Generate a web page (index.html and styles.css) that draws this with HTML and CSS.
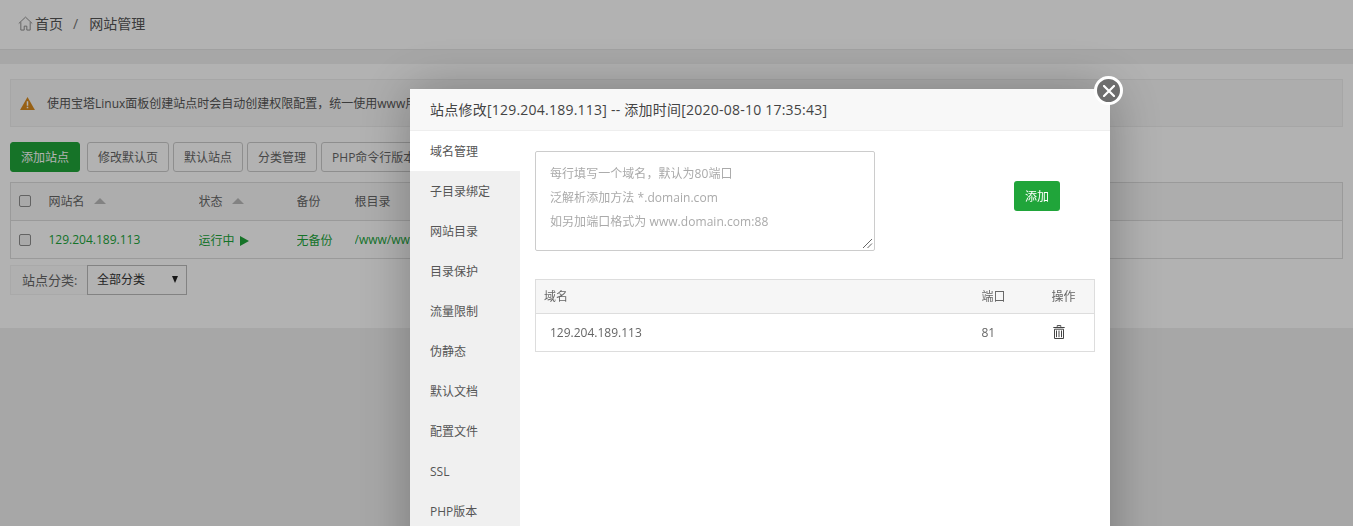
FILE: index.html
```html
<!DOCTYPE html>
<html lang="zh">
<head>
<meta charset="utf-8">
<title>网站管理</title>
<link rel="stylesheet" href="styles.css">
</head>
<body>
<div class="page">
  <header class="crumbs">
    <svg class="home" viewBox="0 0 16 16" width="15" height="15"><path d="M.8 8 8 1.200 15.200 8M3 6.600V15h3.600v-4.200h2.800V15H13V6.600" fill="none" stroke="#8a8a8a" stroke-width="1"/></svg>
    <span class="crumb">首页</span><span class="sep">/</span><span class="crumb">网站管理</span>
  </header>
  <main class="panel">
    <div class="alert">
      <svg class="warn" viewBox="0 0 16 14" width="15" height="13"><path d="M8 0 16 14H0Z" fill="#d98a1e"/><path d="M7.200 4.500h1.600v5H7.200zM7.200 10.600h1.600v1.600H7.200z" fill="#fff"/></svg>
      <span>使用宝塔Linux面板创建站点时会自动创建权限配置，统一使用www用户</span>
    </div>
    <div class="toolbar">
      <button class="btn primary">添加站点</button>
      <button class="btn">修改默认页</button>
      <button class="btn">默认站点</button>
      <button class="btn">分类管理</button>
      <button class="btn">PHP命令行版本</button>
    </div>
    <table class="sites">
      <thead>
        <tr>
          <th class="c-check"><span class="check"></span></th>
          <th class="c-name">网站名<span class="sort"></span></th>
          <th class="c-status">状态<span class="sort"></span></th>
          <th class="c-backup">备份</th>
          <th>根目录</th>
        </tr>
      </thead>
      <tbody>
        <tr>
          <td class="c-check"><span class="check"></span></td>
          <td class="green">129.204.189.113</td>
          <td class="green">运行中 <span class="play"></span></td>
          <td class="green">无备份</td>
          <td class="green">/www/www</td>
        </tr>
      </tbody>
    </table>
    <div class="filter">
      <span class="filter-label">站点分类:</span>
      <div class="select"><span>全部分类</span><span class="caret"></span></div>
    </div>
  </main>
</div>

<div class="shade">
  <section class="modal">
    <button class="close" aria-label="关闭">
      <svg viewBox="0 0 12 12" width="12" height="12"><path d="M1 1 11 11M11 1 1 11" stroke="#fff" stroke-width="2.200" stroke-linecap="round"/></svg>
    </button>
    <h2 class="modal-title">站点修改[129.204.189.113] -- 添加时间[2020-08-10 17:35:43]</h2>
    <div class="modal-body">
      <nav class="tabs">
        <a class="tab active">域名管理</a>
        <a class="tab">子目录绑定</a>
        <a class="tab">网站目录</a>
        <a class="tab">目录保护</a>
        <a class="tab">流量限制</a>
        <a class="tab">伪静态</a>
        <a class="tab">默认文档</a>
        <a class="tab">配置文件</a>
        <a class="tab">SSL</a>
        <a class="tab">PHP版本</a>
      </nav>
      <div class="content">
        <div class="add-row">
          <div class="textarea">
            <p>每行填写一个域名，默认为80端口</p>
            <p>泛解析添加方法 *.domain.com</p>
            <p>如另加端口格式为 www.domain.com:88</p>
            <svg class="grip" viewBox="0 0 11 11" width="11" height="11"><path d="M1 10 10 1M5.500 10 10 5.500" stroke="#666" stroke-width="1" fill="none"/></svg>
          </div>
          <button class="add">添加</button>
        </div>
        <table class="domains">
          <thead>
            <tr><th class="d-name">域名</th><th class="d-port">端口</th><th class="d-op">操作</th></tr>
          </thead>
          <tbody>
            <tr>
              <td class="d-host">129.204.189.113</td>
              <td class="d-port">81</td>
              <td class="d-op">
                <svg class="trash" viewBox="0 0 12 14" width="12" height="14"><path d="M4.200 1.800V.6h3.600v1.200M.3 2.500h11.400M1.500 4.200h9v9.300h-9z" fill="none" stroke="#444" stroke-width="1"/><path d="M3.500 5.500v6.700M6 5.500v6.700M8.500 5.500v6.700" stroke="#444" stroke-width="1"/></svg>
              </td>
            </tr>
          </tbody>
        </table>
      </div>
    </div>
  </section>
</div>
</body>
</html>
```
FILE: styles.css
```css
* { box-sizing: border-box; }
html, body { height: 100%; margin: 0; overflow: hidden; }
body {
  background: #f0f0f0;
  color: #666;
  font-family: "Open Sans", "Noto Sans CJK SC", sans-serif;
  font-size: 12px;
}
button { font-family: inherit; }

.crumbs {
  height: 50px;
  background: #fff;
  border-bottom: 1px solid #e6e6e6;
  display: flex;
  align-items: center;
  padding: 0 0 3px 18px;
  font-size: 14px;
  color: #555;
}
.home { margin-right: 2px; }
.sep { margin: 0 11px 0 10px; color: #777; }

.panel {
  margin-top: 14px;
  height: 264px;
  background: #fff;
  padding: 15px 10px 0;
}
.alert {
  height: 48px;
  background: #f8f8f8;
  border: 1px solid #eee;
  display: flex;
  align-items: center;
  padding-left: 9px;
  color: #555;
  white-space: nowrap;
  overflow: hidden;
}
.warn { margin-right: 12px; }

.toolbar { display: flex; gap: 4px; margin-top: 15px; }
.btn {
  height: 30px;
  padding: 0 10px;
  background: #fff;
  border: 1px solid #ccc;
  border-radius: 3px;
  color: #666;
  font-size: 12px;
  white-space: nowrap;
}
.btn.primary { background: #20a53a; border-color: #20a53a; color: #fff; margin-right: 3px; }

.sites {
  width: 100%;
  margin-top: 10px;
  border-collapse: collapse;
  table-layout: fixed;
  border: 1px solid #ddd;
}
.sites th, .sites td { padding: 0; text-align: left; font-weight: 400; height: 38px; white-space: nowrap; overflow: hidden; }
.sites th { height: 38px; padding-bottom: 2px; background: #f8f8f8; border-bottom: 1px solid #ddd; }
.c-check { width: 38px; padding-left: 8px !important; }
.c-name { width: 150px; }
.c-status { width: 98px; }
.c-backup { width: 58px; }
.check {
  display: block;
  width: 12px;
  height: 12px;
  margin-left: 0;
  background: #f2f2f2;
  border: 1px solid #8f8f8f;
  border-radius: 2px;
}
.sort {
  display: inline-block;
  margin-left: 9px;
  vertical-align: 2px;
  border-left: 6px solid transparent;
  border-right: 6px solid transparent;
  border-bottom: 6px solid #bbb;
}
.green { color: #20a53a; }
.play {
  display: inline-block;
  margin-left: 2px;
  vertical-align: -1px;
  border-top: 5.500px solid transparent;
  border-bottom: 5.500px solid transparent;
  border-left: 9px solid #20a53a;
}

.filter { display: flex; align-items: stretch; height: 30px; margin-top: 6px; }
.filter-label {
  display: flex;
  align-items: center;
  padding: 0 0 2px 11px;
  background: #fcfcfc;
  border: 1px solid #f2f2f2;
  border-right: 0;
  width: 77px;
  font-size: 13px;
  white-space: nowrap;
}
.select {
  width: 100px;
  display: flex;
  align-items: center;
  justify-content: space-between;
  padding: 0 8px 2px 9px;
  background: #fff;
  border: 1px solid #bbb;
  color: #333;
}
.caret {
  border-left: 3.500px solid transparent;
  border-right: 3.500px solid transparent;
  border-top: 7px solid #222;
}

.shade {
  position: fixed;
  inset: 0;
  background: rgba(0, 0, 0, .3);
  overflow: hidden;
}
.modal {
  position: absolute;
  left: 410px;
  top: 89px;
  width: 700px;
  height: 600px;
  background: #fff;
  box-shadow: 1px 1px 50px rgba(0, 0, 0, .3);
}
.close {
  position: absolute;
  top: -13px;
  right: -13px;
  width: 29px;
  height: 29px;
  padding: 0;
  border: 3px solid #fff;
  border-radius: 50%;
  background: #6e6e6e;
  display: flex;
  align-items: center;
  justify-content: center;
}
.modal-title {
  height: 42px;
  margin: 0;
  padding: 0 20px 1px;
  display: flex;
  align-items: center;
  background: #f8f8f8;
  border-bottom: 1px solid #eee;
  font-size: 14px;
  font-weight: 400;
  letter-spacing: .23px;
  color: #444;
}
.modal-body { display: flex; height: 558px; }
.tabs { width: 110px; background: #f0f0f0; flex: none; }
.tab {
  display: flex;
  align-items: center;
  height: 40px;
  padding-left: 20px;
  color: #555;
}
.tab.active { background: #fff; }
.content { flex: 1; padding: 20px 15px 0; }
.add-row { display: flex; align-items: flex-start; }
.textarea {
  position: relative;
  width: 340px;
  height: 100px;
  border: 1px solid #ccc;
  border-radius: 2px;
  padding: 10px 14px;
  color: #aaa;
  font-size: 12px;
}
.textarea p { margin: 0; height: 24px; line-height: 24px; white-space: nowrap; letter-spacing: .05px; }
.grip { position: absolute; right: 1px; bottom: 1px; }
.add {
  width: 46px;
  height: 30px;
  margin: 30px 0 0 139px;
  padding: 0;
  background: #20a53a;
  border: 0;
  border-radius: 3px;
  color: #fff;
  font-size: 12px;
}
.domains {
  width: 100%;
  margin-top: 28px;
  border-collapse: collapse;
  table-layout: fixed;
  border: 1px solid #ddd;
}
.domains th, .domains td { padding: 0; text-align: left; font-weight: 400; color: #666; }
.domains th { height: 34px; padding-bottom: 2px; background: #f6f6f6; border-bottom: 1px solid #ddd; }
.domains td { height: 38px; }
.d-name { padding-left: 8px !important; }
.d-host { padding-left: 14px !important; }
.d-port { width: 70px; }
.d-op { width: 43px; }
.trash { display: block; margin: 0 0 2px 1px; }
```
